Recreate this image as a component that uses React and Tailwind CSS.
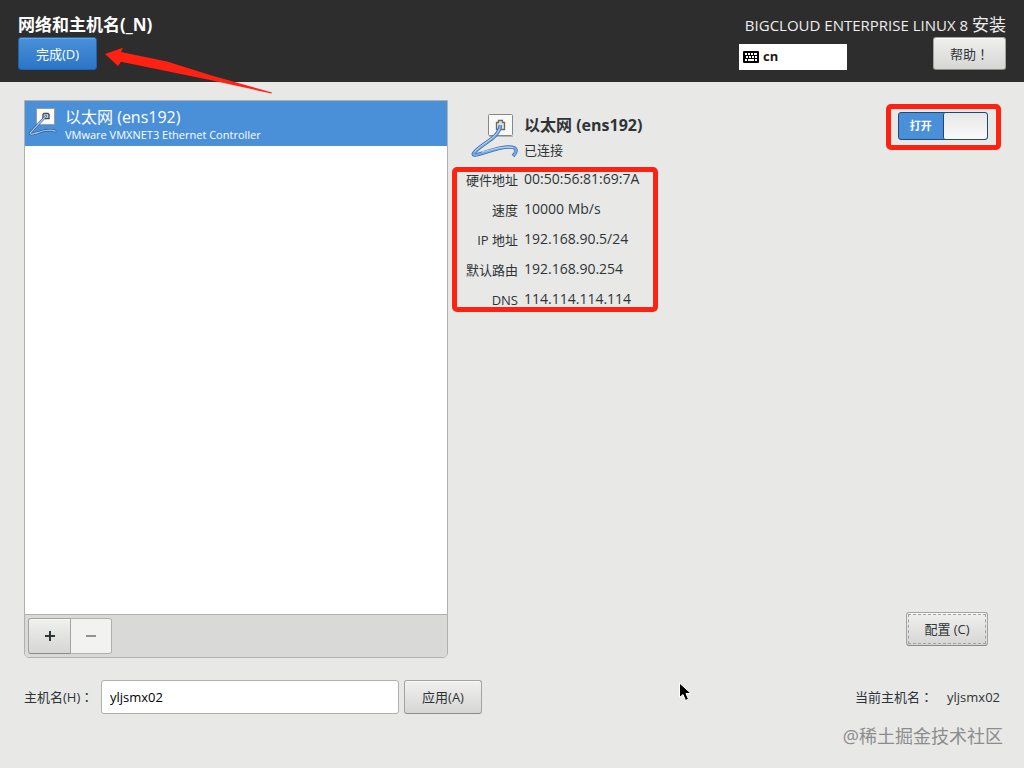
import React, { useState } from "react";

const buttonBase =
  "flex cursor-pointer items-center justify-center rounded-[3px] border border-[#a3a3a0] border-b-[#8b8b88] bg-linear-to-b from-[#f0f0ef] to-[#d6d6d4] text-[13px] leading-5 text-[#2e3436] shadow-[inset_0_1px_#fafafa]";

const details = [
  ["硬件地址", "00:50:56:81:69:7A"],
  ["速度", "10000 Mb/s"],
  ["IP 地址", "192.168.90.5/24"],
  ["默认路由", "192.168.90.254"],
  ["DNS", "114.114.114.114"],
];

function WiredIcon({ className }) {
  return (
    <svg className={className} viewBox="0 0 48 48" fill="none" aria-hidden="true">
      <rect x="17.5" y="2.500" width="24" height="21" rx="1" fill="#f8f8f7" stroke="#85878a" />
      <path d="M18 24.500h24" stroke="#b5b5b3" />
      <path d="M25.500 17.500v-7h2v-2h4v2h2v7z" fill="#e4e4e0" stroke="#686b67" strokeWidth="1.300" />
      <path d="M29.500 13C28 27 9 32 2.500 41.500C1 47 23 35 38 35C45 35 47.500 38 42 44" stroke="#3a6cae" strokeWidth="3.600" strokeLinejoin="round" />
      <path d="M29.500 13C28 27 9 32 2.500 41.500C1 47 23 35 38 35C45 35 47.500 38 42 44" stroke="#78a9e5" strokeWidth="2.200" strokeLinejoin="round" />
      <path d="M28.500 17C25 27 9 32 4 39.500M11 40C23 37 32 34 42 35.500" stroke="#c4dcf6" strokeWidth="0.900" strokeLinecap="round" />
    </svg>
  );
}

function SmallWiredIcon({ className }) {
  return (
    <svg className={className} viewBox="0 0 28 28" fill="none" aria-hidden="true">
      <rect x="7.500" y="0.500" width="18" height="16" fill="#fafaf8" stroke="#9a9d9f" />
      <path d="M14 10.500v-4l1-1h4l1 1v4z" fill="#e1e2e1" stroke="#454a52" strokeWidth="1.400" />
      <path d="M17 8L1.500 24.500C-1 29 11 23 17 22.500C22 22 27 22 26 24" stroke="#295487" strokeWidth="2.400" strokeLinecap="round" />
      <path d="M17 8L1.500 24.500C-1 29 11 23 17 22.500C22 22 27 22 26 24" stroke="#a8cbf0" strokeWidth="1.200" strokeLinecap="round" />
    </svg>
  );
}

function KeyboardIcon() {
  return (
    <svg className="h-3 w-4" viewBox="0 0 16 12" aria-hidden="true">
      <rect width="16" height="12" rx="1" fill="#000" />
      <path d="M2 2h2v2H2zM5 2h2v2H5zM8 2h2v2H8zM11 2h3v2h-3zM3 5h2v2H3zM6 5h2v2H6zM9 5h2v2H9zM12 5h2v2h-2zM2 8h2v2H2zM5 8h6v2H5zM12 8h2v2h-2z" fill="#fff" />
    </svg>
  );
}

function Punctuation({ children }) {
  return <span className="font-['Noto_Sans_CJK_TC',sans-serif]">{children}</span>;
}

function Header() {
  return (
    <header className="relative flex h-[82px] justify-between bg-[#2d2d2d] px-[18px] pt-[13px]">
      <div className="flex flex-col items-start">
        <h1 className="text-[17px] leading-6 font-bold text-white">网络和主机名(_N)</h1>
        <button className="flex h-[33px] w-[79px] cursor-pointer items-center justify-center rounded-[3px] border border-[#2363ab] bg-linear-to-b from-[#4a90d9] to-[#2a76c6] text-[13px] leading-5 text-white shadow-[inset_0_1px_#67a4e0]">
          完成(D)
        </button>
      </div>
      <div className="w-[267px]">
        <p className="h-6 text-right text-[15px] leading-6 font-normal whitespace-nowrap text-[#eeeeec]">
          BIGCLOUD ENTERPRISE LINUX 8 <span className="text-[17px]">安装</span>
        </p>
        <div className="flex items-end justify-between">
          <button className="flex h-[26px] w-[108px] cursor-pointer items-center gap-1 bg-white px-1 text-[13px] font-bold text-[#1a1a1a]">
            <KeyboardIcon />
            cn
          </button>
          <button className={`${buttonBase} h-[33px] w-[73px]`}>帮助<Punctuation>！</Punctuation></button>
        </div>
      </div>
      <svg className="pointer-events-none absolute top-[47px] left-[105px] h-12 w-[168px]" viewBox="0 0 168 48" aria-hidden="true">
        <path d="M0 7L18 0.700L16 5L62 14.500L105 28L167 45.500L166.500 46.500L105 33L16 14.700L13 19Z" fill="#ff2112" />
      </svg>
    </header>
  );
}

function DeviceList() {
  return (
    <section className="flex flex-col overflow-hidden rounded-b-[5px] border border-[#b0b0ae] bg-white">
      <ul className="flex-1">
        <li className="flex h-[45px] items-start gap-2 bg-[#4a90d9] pt-[7px] pl-1 text-white">
          <SmallWiredIcon className="h-7 w-7 shrink-0" />
          <div>
            <p className="text-[16px] leading-[19px]">以太网 (ens192)</p>
            <p className="text-[11px] leading-4">VMware VMXNET3 Ethernet Controller</p>
          </div>
        </li>
      </ul>
      <div className="flex h-[43px] items-center border-t border-[#b0b0ae] bg-[#d9d9d7] px-[3px]">
        <button aria-label="添加" className={`${buttonBase} h-9 w-[43px] rounded-r-none`}>
          <svg className="h-[10px] w-[10px]" viewBox="0 0 10 10"><path d="M4 0h2v4h4v2H6v4H4V6H0V4h4z" fill="#2e3436" /></svg>
        </button>
        <button aria-label="移除" disabled className="flex h-9 w-[41px] items-center justify-center rounded-r-[3px] border border-l-0 border-[#b0b0ae] bg-[#f2f2f1]">
          <svg className="h-[10px] w-[10px]" viewBox="0 0 10 10"><path d="M0 4h10v2H0z" fill="#8f9290" /></svg>
        </button>
      </div>
    </section>
  );
}

function PowerSwitch() {
  const [on, setOn] = useState(true);
  return (
    <div className="relative">
      <label className="flex h-7 w-[90px] cursor-pointer overflow-hidden rounded-[3px] border border-[#1f4879] bg-[#4a90d9]">
        <input type="checkbox" role="switch" className="sr-only" checked={on} onChange={(e) => setOn(e.target.checked)} />
        <span className={`flex flex-1 items-center justify-center text-[11px] font-bold text-white ${on ? "order-1" : "order-2"}`}>
          {on ? "打开" : "关闭"}
        </span>
        <span className={`flex-1 rounded-[2px] border-l border-[#1f4879] bg-linear-to-b from-[#e6e6e5] to-[#fafafa] ${on ? "order-2" : "order-1"}`} />
      </label>
      <div className="pointer-events-none absolute -top-2 -right-[13px] -bottom-[10px] -left-3 rounded-[5px] border-5 border-[#ff2112]" />
    </div>
  );
}

function DeviceDetails() {
  return (
    <section className="flex flex-col justify-between pr-[13px] pb-3">
      <div className="flex items-start justify-between pt-3">
        <div>
          <div className="flex gap-[5px]">
            <WiredIcon className="-ml-px h-12 w-12" />
            <div>
              <h2 className="text-[16px] leading-[26px] font-bold text-[#2e3436]">以太网 (ens192)</h2>
              <p className="text-[13px] leading-6">已连接</p>
            </div>
          </div>
          <div className="relative mt-[7px]">
            <dl className="-ml-[6px] grid grid-cols-[52px_auto] gap-x-[6px] gap-y-[9px] leading-5">
              {details.map(([name, value]) => (
                <React.Fragment key={name}>
                  <dt className="pt-px text-right text-[13px] whitespace-nowrap">{name}</dt>
                  <dd className="text-[14px]">{value}</dd>
                </React.Fragment>
              ))}
            </dl>
            <div className="pointer-events-none absolute -top-[2px] -bottom-[2px] -left-5 w-[206px] rounded-[5px] border-5 border-[#ff2112]" />
          </div>
        </div>
        <PowerSwitch />
      </div>
      <button className={`${buttonBase} h-[34px] w-[82px] self-end`}>
        <span className="flex h-[30px] w-[78px] items-center justify-center border border-dashed border-[#a0a09e]">配置 (C)</span>
      </button>
    </section>
  );
}

export default function App() {
  return (
    <div className="relative flex min-h-screen flex-col bg-[#e8e8e7] font-['Open_Sans','Noto_Sans_CJK_SC',sans-serif] font-[370] text-[#2e3436]">
      <Header />
      <main className="flex flex-1 flex-col gap-[22px] px-6 pt-[18px] pb-[54px]">
        <div className="-mr-px grid flex-1 grid-cols-[424px_1fr] gap-6">
          <DeviceList />
          <DeviceDetails />
        </div>
        <div className="flex h-[34px] items-center justify-between">
          <form className="flex items-center gap-[5px]" onSubmit={(e) => e.preventDefault()}>
            <label htmlFor="hostname" className="w-[72px] text-[13px] leading-5 whitespace-nowrap">主机名(H)<Punctuation>：</Punctuation></label>
            <input id="hostname" defaultValue="yljsmx02" className="h-[34px] w-[298px] rounded-[3px] border border-[#b0b0ae] bg-white px-2 text-[13px] text-black" />
            <button className={`${buttonBase} h-[34px] w-[78px]`}>应用(A)</button>
          </form>
          <p className="flex gap-[14px] text-[13px] leading-5">
            <span>当前主机名<Punctuation>：</Punctuation></span>
            <span>yljsmx02</span>
          </p>
        </div>
      </main>
      <svg className="pointer-events-none absolute top-[682px] left-[678px] h-5 w-[14px]" viewBox="0 0 14 20" aria-hidden="true">
        <path d="M1.500 1V15.500L5 12.500L7.500 18.500L10.500 17.200L8 11.500H13Z" fill="#000" stroke="#fff" />
      </svg>
      <p className="pointer-events-none absolute right-[21px] bottom-5 text-[18px] leading-6 text-[#8c8c8d]">@稀土掘金技术社区</p>
    </div>
  );
}
